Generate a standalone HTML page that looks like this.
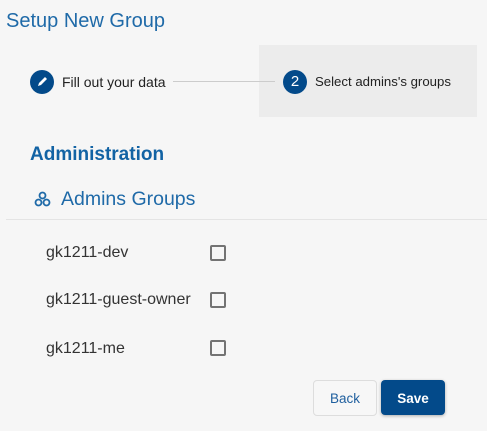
<!DOCTYPE html>
<html><head><style>
body{margin:0;width:487px;height:431px;background:#f6f6f6;font-family:"Liberation Sans",sans-serif;position:relative;overflow:hidden}
.a{position:absolute;white-space:nowrap}
.cb{position:absolute;left:210px;width:12px;height:12px;border:2px solid #737373;border-radius:2px}
.circ{position:absolute;width:24px;height:24px;border-radius:50%;background:#034a8a;color:#fff;font-size:15px;text-align:center;line-height:24px}
</style></head><body>
<div class="a" style="left:6px;top:10px;font-size:20px;color:#1f6aa8">Setup New Group</div>
<div class="a" style="left:259px;top:45px;width:218px;height:72px;background:#ececec"></div>
<div class="circ" style="left:30px;top:70px"><svg width="24" height="24" viewBox="0 0 24 24"><path d="M8 16l1-3 6-6 2 2-6 6z" fill="#fff"/></svg></div>
<div class="a" style="left:62px;top:74px;font-size:14px;color:#222">Fill out your data</div>
<div class="a" style="left:173px;top:81px;width:102px;height:1px;background:#ccc"></div>
<div class="circ" style="left:283px;top:70px">2</div>
<div class="a" style="left:315px;top:74px;font-size:13.2px;color:#222">Select admins's groups</div>
<div class="a" style="left:30px;top:144px;font-size:19px;font-weight:bold;color:#1263a4">Administration</div>
<svg class="a" style="left:34px;top:191px" width="17" height="17" viewBox="0 0 17 17" fill="none" stroke="#1f6aa8" stroke-width="1.8"><circle cx="8.5" cy="4.5" r="3"/><circle cx="4.5" cy="11.5" r="3"/><circle cx="12.5" cy="11.5" r="3"/></svg>
<div class="a" style="left:61px;top:188px;font-size:19.5px;color:#1f6aa8">Admins Groups</div>
<div class="a" style="left:6px;top:219px;width:481px;height:1px;background:#e4e4e4"></div>
<div class="a" style="left:46px;top:244px;font-size:16px;color:#333">gk1211-dev</div>
<div class="cb" style="top:245px"></div>
<div class="a" style="left:46px;top:291px;font-size:16px;color:#333">gk1211-guest-owner</div>
<div class="cb" style="top:292px"></div>
<div class="a" style="left:46px;top:340px;font-size:16px;color:#333">gk1211-me</div>
<div class="cb" style="top:340px"></div>
<div class="a" style="left:313px;top:380px;width:62px;height:34px;border:1px solid #ddd;border-radius:4px;background:#f7f7f7;color:#1f5f9e;font-size:13.5px;text-align:center;line-height:36px">Back</div>
<div class="a" style="left:381px;top:380px;width:64px;height:35px;border-radius:4px;background:#034a8a;color:#fff;font-size:13.5px;font-weight:bold;text-align:center;line-height:37px;box-shadow:0 1px 3px rgba(0,0,0,.3)">Save</div>
</body></html>
